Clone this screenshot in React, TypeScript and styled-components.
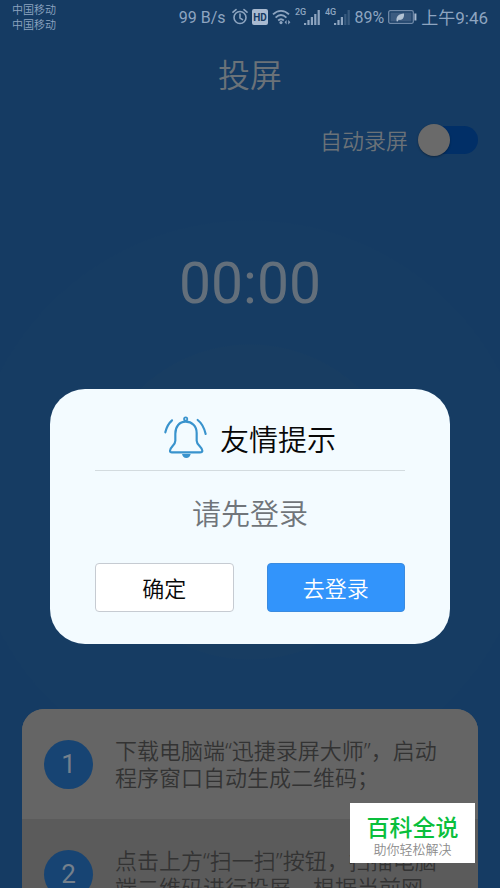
import React from "react";
import styled, { createGlobalStyle } from "styled-components";

const GlobalStyle = createGlobalStyle`
  *, *::before, *::after { box-sizing: border-box; }
  body {
    margin: 0;
    overflow: hidden;
    background: #153b63;
    font-family: Roboto, "Noto Sans CJK SC", sans-serif;
    font-weight: 350;
  }
  h1, h2, p, ol { margin: 0; padding: 0; font-weight: inherit; }
  button, input { font: inherit; margin: 0; }
`;

const Screen = styled.div`
  min-height: 100vh;
  display: flex;
  flex-direction: column;
  color: #6b7278;
  background:
    radial-gradient(circle at 50% 502px, #183d62 157px, transparent 158px),
    radial-gradient(circle at 50% 502px, #163c63 281px, transparent 282px),
    #153b63;
`;

const StatusBar = styled.header`
  display: flex;
  justify-content: space-between;
  align-items: flex-start;
  padding: 2px 12px 0 12px;
  height: 38px;
  color: #8ea5c0;
  font-weight: 400;
`;

const Carriers = styled.div`
  padding-top: 1px;
  font-size: 11px;
  font-weight: 350;
  line-height: 15px;
`;

const StatusGroup = styled.div`
  display: flex;
  align-items: center;
  gap: 4px;
  height: 30px;
  font-size: 16px;
  white-space: nowrap;
  svg { display: block; flex: none; }
`;

const Clock = styled.time`
  padding-bottom: 2px;
  font-size: 17px;
`;

const Title = styled.h1`
  padding-top: 14px;
  text-align: center;
  font-size: 32px;
  line-height: 48px;
`;

const RecordRow = styled.label`
  display: flex;
  align-items: center;
  justify-content: flex-end;
  gap: 15px;
  padding: 22px 22px 0;
  font-size: 22px;
  line-height: 32px;
`;

const RecordLabel = styled.span`
  padding-top: 4px;
`;

const Toggle = styled.input`
  appearance: none;
  display: flex;
  align-items: center;
  width: 55px;
  height: 28px;
  border-radius: 14px;
  background: #012f67;
  &::before {
    content: "";
    flex: none;
    width: 32px;
    height: 32px;
    margin-left: -5px;
    border-radius: 50%;
    background: #6a6a6a;
    box-shadow: 0 1px 2px rgba(0, 0, 0, 0.35);
  }
`;

const Timer = styled.div`
  padding-top: 90px;
  text-align: center;
  color: #636f7b;
  font-size: 57px;
  font-weight: 400;
  line-height: 72px;
`;

const Steps = styled.ol`
  list-style: none;
  margin: 389px 22px 0;
  border-radius: 22px 22px 0 0;
  overflow: hidden;
  background: #656565;
`;

const Step = styled.li<{ $shaded?: boolean }>`
  display: flex;
  align-items: center;
  gap: 22px;
  min-height: 110px;
  padding: 28px 22px;
  color: #333333;
  background: ${(p) => (p.$shaded ? "#5b5b5b" : "#656565")};
`;

const StepText = styled.p`
  font-family: "Noto Sans", "Noto Sans CJK SC", sans-serif;
  font-size: 22px;
  line-height: 27px;
`;

const StepNumber = styled.span`
  flex: none;
  display: grid;
  place-items: center;
  width: 49px;
  height: 49px;
  border-radius: 50%;
  background: #174473;
  color: #74808c;
  font-size: 26px;
  font-weight: 400;
`;

const Overlay = styled.div`
  position: fixed;
  inset: 0;
  display: flex;
  align-items: center;
  justify-content: center;
  padding: 145px 50px 0;
`;

const Dialog = styled.section`
  width: 100%;
  max-width: 480px;
  padding: 20px 45px 32px;
  border-radius: 35px;
  background: #f3fbff;
`;

const DialogHeader = styled.div`
  display: flex;
  align-items: center;
  justify-content: center;
  gap: 13px;
  padding-bottom: 5px;
  height: 62px;
  border-bottom: 1px solid #d3dbdf;
`;

const DialogTitle = styled.h2`
  padding-top: 8px;
  color: #080808;
  font-size: 29px;
  line-height: 40px;
`;

const Message = styled.p`
  padding: 24px 0 27px;
  text-align: center;
  color: #70757a;
  font-size: 29px;
  line-height: 41px;
`;

const Actions = styled.div`
  display: grid;
  grid-template-columns: 1fr 1fr;
  gap: 33px;
`;

const ActionButton = styled.button<{ $primary?: boolean }>`
  height: 49px;
  padding: 0 0 2px;
  border: 1px solid ${(p) => (p.$primary ? "#3a8be0" : "#c6cbd2")};
  border-radius: 4px;
  background: ${(p) => (p.$primary ? "#3294fb" : "#ffffff")};
  color: ${(p) => (p.$primary ? "#ffffff" : "#080808")};
  font-size: 22px;
`;

const Badge = styled.aside`
  position: fixed;
  right: 25px;
  bottom: 25px;
  width: 125px;
  height: 60px;
  padding-top: 12px;
  text-align: center;
  background: #ffffff;
`;

const BadgeName = styled.div`
  color: #0abf3c;
  font-size: 23px;
  font-weight: 500;
  line-height: 27px;
`;

const BadgeSlogan = styled.div`
  color: #8c8c8c;
  font-size: 13px;
  line-height: 16px;
`;

const AlarmIcon = () => (
  <svg width="18" height="18" viewBox="-2 0 18 18" fill="none" stroke="currentColor" strokeWidth="1.6" strokeLinecap="round">
    <circle cx="8" cy="9.5" r="6" />
    <path d="M8 6v4l2.5 1.6M1 4.2 4 1.6M15 4.2 12 1.6" />
  </svg>
);

const HdIcon = () => (
  <svg width="16" height="16" viewBox="0 0 16 16">
    <rect width="16" height="16" rx="2" fill="#a9bad0" />
    <text x="8" y="12" textAnchor="middle" fontFamily="Roboto, sans-serif" fontSize="10" fontWeight="700" fill="#153b63">HD</text>
  </svg>
);

const WifiIcon = () => (
  <svg width="19" height="16" viewBox="0 0 19 16" fill="none" stroke="currentColor" strokeWidth="1.8">
    <path d="M1 5.4C5.8.6 12.2.6 17 5.4M3.6 8.6c3.4-3.2 7.4-3.2 10.8 0M6.2 11.5c1.8-1.6 3.8-1.6 5.6 0" />
    <circle cx="9" cy="13.6" r="1.6" fill="currentColor" stroke="none" />
    <path d="M12.6 13.2 14.6 11v4.4zM18.4 13.2 16.2 11v4.4z" fill="currentColor" stroke="none" />
  </svg>
);

const SignalIcon = ({ network, bars }: { network: string; bars: number }) => (
  <svg width="26" height="20" viewBox="0 0 26 20" fill="currentColor">
    <text x="0" y="8" fontFamily="Roboto, sans-serif" fontSize="9" fontWeight="500">{network}</text>
    {[2, 5, 8, 11, 15].map((height, i) => (
      <rect key={height} x={9 + i * 3.4} y={18 - height} width="2.2" height={height} opacity={i < bars ? 1 : 0.3} />
    ))}
  </svg>
);

const BatteryIcon = () => (
  <svg width="29" height="14" viewBox="0 0 29 14" fill="none">
    <rect x="0.7" y="0.7" width="24.6" height="12.6" rx="1.5" stroke="#7089a8" strokeWidth="1.3" />
    <rect x="2.5" y="2.5" width="21" height="9" fill="#3c5b80" />
    <path d="M27.4 3.5v7" stroke="#a9bad0" strokeWidth="2" />
    <path d="M8.6 11.2c-.7-4.6 2-7.2 7.4-7.6.4 4.6-1.8 7-5.4 6.2l-1 1.6z" fill="#b4c3d4" />
  </svg>
);

const BellIcon = () => (
  <svg width="43" height="43" viewBox="42 33 129 129" fill="none" stroke="#3993cd" strokeWidth="6.5" strokeLinecap="round" strokeLinejoin="round" aria-hidden="true">
    <circle cx="107" cy="42" r="5" strokeWidth="5" />
    <path d="M107 50C88 50 76 65 76 86V107C76 121 60 126 60 137Q60 142 66 142H150Q157 142 157 137C157 126 140 121 140 107V84C140 63 126 50 107 50Z" />
    <path d="M66 46C56 55 49 68 46 82M143 45C155 54 163 70 167 87" />
    <path d="M96 147H122C120 155 116 159 109 159S98 155 96 147Z" fill="#3993cd" stroke="none" />
  </svg>
);

const steps = [
  "下载电脑端“迅捷录屏大师”，启动程序窗口自动生成二维码；",
  "点击上方“扫一扫”按钮，扫描电脑端二维码进行投屏，根据当前网",
];

export default function App() {
  return (
    <>
      <GlobalStyle />
      <Screen>
        <StatusBar>
          <Carriers>
            <div>中国移动</div>
            <div>中国移动</div>
          </Carriers>
          <StatusGroup>
            <span>99 B/s</span>
            <AlarmIcon />
            <HdIcon />
            <WifiIcon />
            <SignalIcon network="2G" bars={5} />
            <SignalIcon network="4G" bars={3} />
            <span>89%</span>
            <BatteryIcon />
            <Clock>上午9:46</Clock>
          </StatusGroup>
        </StatusBar>
        <Title>投屏</Title>
        <RecordRow>
          <RecordLabel>自动录屏</RecordLabel>
          <Toggle type="checkbox" role="switch" />
        </RecordRow>
        <Timer>00:00</Timer>
        <Steps>
          {steps.map((text, i) => (
            <Step key={text} $shaded={i % 2 === 1}>
              <StepNumber>{i + 1}</StepNumber>
              <StepText>{text}</StepText>
            </Step>
          ))}
        </Steps>
      </Screen>
      <Overlay>
        <Dialog role="dialog" aria-modal="true" aria-labelledby="dialog-title">
          <DialogHeader>
            <BellIcon />
            <DialogTitle id="dialog-title">友情提示</DialogTitle>
          </DialogHeader>
          <Message>请先登录</Message>
          <Actions>
            <ActionButton type="button">确定</ActionButton>
            <ActionButton type="button" $primary>去登录</ActionButton>
          </Actions>
        </Dialog>
      </Overlay>
      <Badge>
        <BadgeName>百科全说</BadgeName>
        <BadgeSlogan>助你轻松解决</BadgeSlogan>
      </Badge>
    </>
  );
}
